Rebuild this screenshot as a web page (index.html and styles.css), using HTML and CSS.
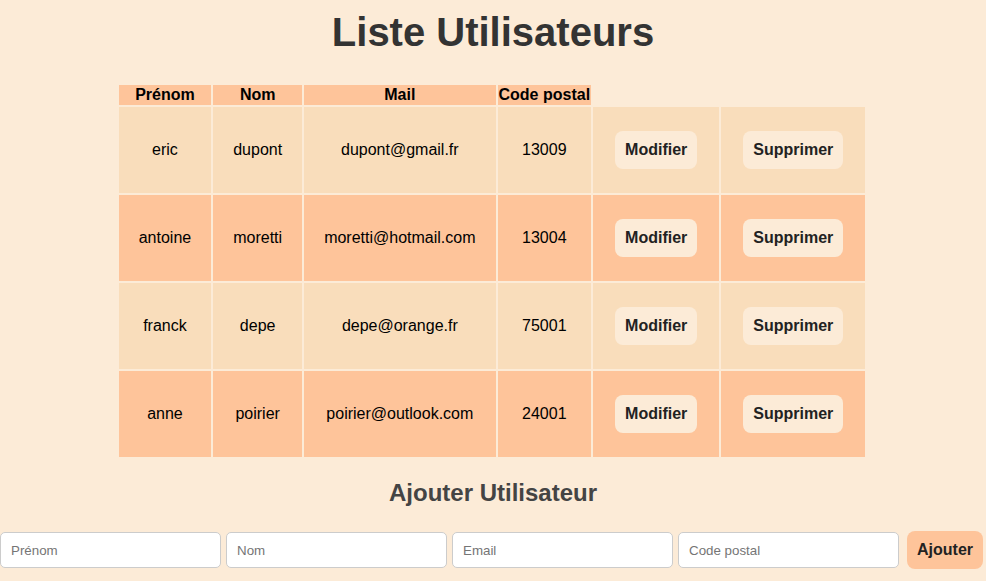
FILE: index.html
```html
<!DOCTYPE html>
<html lang="fr">
<head>
<meta charset="utf-8">
<title>Liste Utilisateurs</title>
<link rel="stylesheet" href="styles.css">
</head>
<body>
<div class="page">
  <h1 class="title">Liste Utilisateurs</h1>
  <div class="table-wrap">
  <table class="users">
    <thead>
      <tr>
        <th>Prénom</th>
        <th>Nom</th>
        <th>Mail</th>
        <th>Code postal</th>
      </tr>
    </thead>
    <tbody>
      <tr class="odd">
        <td>eric</td><td>dupont</td><td>dupont@gmail.fr</td><td>13009</td>
        <td><button class="btn">Modifier</button></td>
        <td><button class="btn">Supprimer</button></td>
      </tr>
      <tr class="even">
        <td>antoine</td><td>moretti</td><td>moretti@hotmail.com</td><td>13004</td>
        <td><button class="btn">Modifier</button></td>
        <td><button class="btn">Supprimer</button></td>
      </tr>
      <tr class="odd">
        <td>franck</td><td>depe</td><td>depe@orange.fr</td><td>75001</td>
        <td><button class="btn">Modifier</button></td>
        <td><button class="btn">Supprimer</button></td>
      </tr>
      <tr class="even">
        <td>anne</td><td>poirier</td><td>poirier@outlook.com</td><td>24001</td>
        <td><button class="btn">Modifier</button></td>
        <td><button class="btn">Supprimer</button></td>
      </tr>
    </tbody>
  </table>
  </div>
  <h2 class="subtitle">Ajouter Utilisateur</h2>
  <form class="add-form">
    <input class="field" type="text" placeholder="Prénom">
    <input class="field" type="text" placeholder="Nom">
    <input class="field" type="text" placeholder="Email">
    <input class="field" type="text" placeholder="Code postal">
    <button class="add-btn" type="button">Ajouter</button>
  </form>
</div>
</body>
</html>
```

FILE: styles.css
```css
html, body {
  margin: 0;
  padding: 0;
  background: #fcebd7;
}

body {
  font-family: "Liberation Sans", Arial, Helvetica, sans-serif;
  color: #000;
}

.page {
  padding-top: 9px;
}

.title {
  margin: 0 0 28px;
  font-size: 40px;
  line-height: 46px;
  font-weight: bold;
  color: #333;
  text-align: center;
}

.table-wrap {
  padding-right: 2px;
}

.users {
  margin: 0 auto;
  border-collapse: separate;
  border-spacing: 2px;
  font-size: 16px;
}

.users th {
  background: #fec49a;
  padding: 0 1px;
  line-height: 20px;
  font-weight: bold;
  color: #000;
  text-align: center;
}

.users td {
  padding: 20px;
  text-align: center;
  vertical-align: middle;
  line-height: 18px;
}

.users tr.odd td {
  background: #f9ddbb;
}

.users tr.even td {
  background: #fec49a;
}

.btn {
  margin: 4px 2px;
  padding: 10px;
  border: none;
  border-radius: 8px;
  background: #fcebd7;
  color: #222;
  font-family: "Liberation Sans", Arial, Helvetica, sans-serif;
  font-size: 16px;
  font-weight: bold;
  line-height: 18px;
  cursor: pointer;
}

.subtitle {
  margin: 20px 0 25px;
  font-size: 24px;
  line-height: 27px;
  font-weight: bold;
  color: #444;
  text-align: center;
}

.add-form {
  display: flex;
  align-items: center;
  gap: 5px;
  margin: 0;
}

.field {
  box-sizing: border-box;
  width: 221px;
  height: 36px;
  flex: none;
  margin: 0;
  padding: 0 10px;
  border: 1px solid #cccccc;
  border-radius: 5px;
  background: #fff;
  font-family: "Liberation Sans", Arial, Helvetica, sans-serif;
  font-size: 13.33px;
  color: #333;
}

.field::placeholder {
  color: #757575;
}

.add-btn {
  margin-left: 3px;
  padding: 10px;
  border: none;
  border-radius: 8px;
  background: #fec49a;
  color: #222;
  font-family: "Liberation Sans", Arial, Helvetica, sans-serif;
  font-size: 16px;
  font-weight: bold;
  line-height: 18px;
  cursor: pointer;
}
```
